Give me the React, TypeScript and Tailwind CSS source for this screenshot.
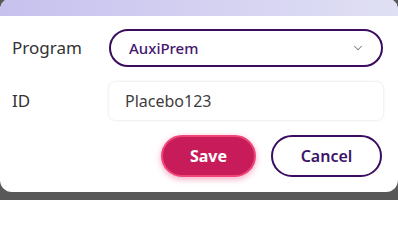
import { ChevronDown } from 'lucide-react'

export default function App() {
  return (
    <div className="h-[200px] overflow-hidden bg-[#585858] font-['Noto_Sans',sans-serif]">
      <div className="-mt-[2px] overflow-hidden rounded-xl bg-white">
        <div className="h-[18px] bg-gradient-to-r from-[#c7c1ee] to-[#e0e0f4]" />

        <div className="flex flex-col gap-[15px] pl-3 pr-[15px] pt-[13px] pb-[15px]">
          <div className="flex items-center">
            <label className="w-[97px] text-[17px] text-[#333333]">Program</label>
            <button
              type="button"
              className="flex h-[38px] flex-1 items-center justify-between rounded-full border-2 border-[#3a0d60] bg-white pl-[18px] pr-[16px]"
            >
              <span className="text-[15px] font-medium text-[#45176f]">AuxiPrem</span>
              <ChevronDown size={14} strokeWidth={1.75} className="text-[#7a7a7a]" />
            </button>
          </div>

          <div className="flex items-center">
            <label className="w-[97px] text-[17px] text-[#333333]">ID</label>
            <input
              readOnly
              value="Placebo123"
              className="h-[38px] flex-1 rounded-md bg-white px-4 text-[16px] text-[#3d3d3d] shadow-[0_0_3px_rgba(0,0,0,0.14)] outline-none"
            />
          </div>

          <div className="flex justify-end gap-[15px] pr-[1px]">
            <button
              type="button"
              className="h-[42px] w-[95px] rounded-full border-2 border-[#ef4579] bg-[#c81c5a] text-[16px] font-bold text-white shadow-[0_2px_6px_rgba(235,60,115,0.45)]"
            >
              Save
            </button>
            <button
              type="button"
              className="h-[42px] w-[111px] rounded-full border-2 border-[#3a0d60] bg-white text-[16px] font-semibold text-[#3b1668]"
            >
              Cancel
            </button>
          </div>
        </div>
      </div>
    </div>
  )
}
